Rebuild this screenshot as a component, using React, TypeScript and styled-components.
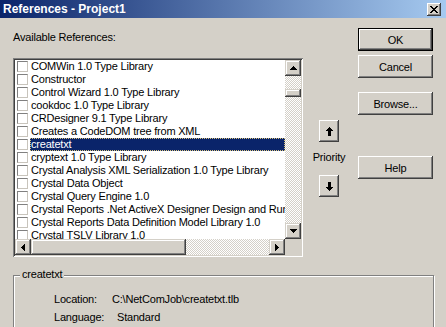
import React from "react"
import styled, { createGlobalStyle, css } from "styled-components"

const GlobalStyle = createGlobalStyle`
  html, body {
    margin: 0;
    padding: 0;
  }
  body {
    background: #d4d0c8;
    font-family: "Liberation Sans", Arial, sans-serif;
    font-size: 11px;
    letter-spacing: -0.2px;
    color: #000;
  }
`

// classic 3d bevels
const pushBevel = css`
  box-shadow: inset -1px -1px #404040, inset 1px 1px #fff, inset -2px -2px #808080;
`
const scrollBevel = css`
  box-shadow: inset -1px -1px #404040, inset 1px 1px #d4d0c8, inset -2px -2px #808080, inset 2px 2px #fff;
`
const checker = css`
  background: repeating-conic-gradient(#ffffff 0% 25%, #d4d0c8 0% 50%) 0 0 / 2px 2px;
`

const Window = styled.div`
  width: 446px;
  height: 327px;
  overflow: hidden;
  background: #d4d0c8;
  display: flex;
  flex-direction: column;
`

const TitleBar = styled.div`
  height: 18px;
  flex-shrink: 0;
  display: flex;
  align-items: center;
  justify-content: space-between;
  padding: 0 5px 0 3px;
  background: linear-gradient(to right, #0a246a, #a6caf0);
`

const Title = styled.span`
  color: #fff;
  font-weight: bold;
  font-size: 12px;
  letter-spacing: 0;
  line-height: 18px;
`

const CloseButton = styled.div`
  width: 14px;
  height: 13px;
  display: flex;
  align-items: center;
  justify-content: center;
  background: #d4d0c8;
  ${pushBevel}
`

const Body = styled.div`
  padding: 10px 0 0 13px;
  display: flex;
  flex-direction: column;
`

const MainGrid = styled.div`
  display: grid;
  grid-template-columns: 290px 55px 75px;
  align-items: start;
`

const LeftCol = styled.div`
  display: flex;
  flex-direction: column;
`

const Caption = styled.div`
  line-height: 13px;
  margin: 3px 0 14px;
`

const ListBox = styled.div`
  width: 290px;
  height: 199px;
  box-sizing: border-box;
  padding: 2px;
  background: #fff;
  box-shadow: inset 1px 1px #808080, inset -1px -1px #fff, inset 2px 2px #404040, inset -2px -2px #d4d0c8;
  display: grid;
  grid-template-columns: 1fr 16px;
  grid-template-rows: 1fr 16px;
`

const Items = styled.div`
  overflow: hidden;
  display: flex;
  flex-direction: column;
`

const Row = styled.div`
  height: 13px;
  flex-shrink: 0;
  display: flex;
  align-items: center;
`

const CheckBox = styled.span`
  width: 11px;
  height: 11px;
  box-sizing: border-box;
  flex-shrink: 0;
  margin: 0 2px 0 2px;
  background: #fff;
  border: 1px solid;
  border-color: #808080 #c8c4bc #c8c4bc #808080;
`

const ItemText = styled.span<{ $selected?: boolean }>`
  flex: 1;
  height: 13px;
  line-height: 13px;
  padding-left: 1px;
  white-space: nowrap;
  overflow: hidden;
  box-sizing: border-box;
  ${({ $selected }) =>
    $selected &&
    css`
      background: #0a246a;
      color: #fff;
      outline: 1px dotted #d8c27a;
      outline-offset: -1px;
    `}
`

const VScroll = styled.div`
  display: flex;
  flex-direction: column;
`

const HScroll = styled.div`
  display: flex;
`

const Track = styled.div<{ $vertical?: boolean }>`
  flex: 1;
  display: flex;
  flex-direction: ${({ $vertical }) => ($vertical ? "column" : "row")};
  ${checker}
`

const Thumb = styled.div<{ $size: number; $offset: number; $vertical?: boolean }>`
  flex-shrink: 0;
  background: #d4d0c8;
  ${scrollBevel}
  ${({ $vertical, $size, $offset }) =>
    $vertical
      ? css`height: ${$size}px; margin-top: ${$offset}px;`
      : css`width: ${$size}px; margin-left: ${$offset}px;`}
`

const ScrollBtn = styled.div`
  width: 16px;
  height: 16px;
  flex-shrink: 0;
  display: flex;
  align-items: center;
  justify-content: center;
  background: #d4d0c8;
  ${scrollBevel}
`

const Corner = styled.div`
  background: #d4d0c8;
`

const PriorityCol = styled.div`
  display: flex;
  flex-direction: column;
  align-items: center;
  padding: 92px 3px 0 0;
`

const ArrowButton = styled.div`
  width: 20px;
  height: 22px;
  display: flex;
  align-items: center;
  justify-content: center;
  background: #d4d0c8;
  ${pushBevel}
`

const PriorityLabel = styled.div`
  line-height: 13px;
  margin: 9px 0 11px;
`

const ButtonCol = styled.div`
  display: flex;
  flex-direction: column;
`

const Button = styled.div<{ $top: number; $default?: boolean }>`
  width: 75px;
  height: 23px;
  margin-top: ${({ $top }) => $top}px;
  display: flex;
  align-items: center;
  justify-content: center;
  background: #d4d0c8;
  ${({ $default }) =>
    $default
      ? css`box-shadow: inset 0 0 0 1px #000, inset -2px -2px #404040, inset 2px 2px #fff, inset -3px -3px #808080;`
      : pushBevel}
`

const GroupBox = styled.div`
  position: relative;
  margin-top: 18px;
  width: 421px;
  height: 80px;
  box-sizing: border-box;
  border: 1px solid #808080;
  box-shadow: inset 1px 1px #fff, 1px 1px #fff;
  padding: 17px 0 0 40px;
`

const Legend = styled.span`
  position: absolute;
  top: -8px;
  left: 6px;
  padding: 0 2px;
  line-height: 13px;
  background: #d4d0c8;
`

const InfoGrid = styled.div`
  display: grid;
  grid-template-columns: 58px auto;
  grid-auto-rows: 18px;
  line-height: 13px;
`

const InfoValue = styled.span<{ $indent?: number }>`
  padding-left: ${({ $indent = 0 }) => $indent}px;
`

type Dir = "up" | "down" | "left" | "right"

// small pixel triangle used on scroll buttons
const Tri = ({ dir }: { dir: Dir }) => {
  const rows = [0, 1, 2, 3].map((i) => ({ start: 3 - i, len: i * 2 + 1 }))
  const vertical = dir === "up" || dir === "down"
  const rects = rows.map((r, i) => {
    const line = dir === "up" || dir === "left" ? i : 3 - i
    return vertical ? (
      <rect key={i} x={r.start} y={line} width={r.len} height={1} />
    ) : (
      <rect key={i} x={line} y={r.start} width={1} height={r.len} />
    )
  })
  return (
    <svg width={vertical ? 7 : 4} height={vertical ? 4 : 7} shapeRendering="crispEdges" fill="#000">
      {rects}
    </svg>
  )
}

// bold arrow for priority buttons
const BigArrow = ({ down }: { down?: boolean }) => (
  <svg width={7} height={9} shapeRendering="crispEdges" fill="#000" style={down ? { transform: "rotate(180deg)" } : undefined}>
    <rect x={3} y={0} width={1} height={1} />
    <rect x={2} y={1} width={3} height={1} />
    <rect x={1} y={2} width={5} height={1} />
    <rect x={0} y={3} width={7} height={1} />
    <rect x={2} y={4} width={3} height={5} />
  </svg>
)

const CloseIcon = () => (
  <svg width={8} height={7} shapeRendering="crispEdges" fill="#000">
    <rect x={0} y={0} width={2} height={1} /><rect x={6} y={0} width={2} height={1} />
    <rect x={1} y={1} width={2} height={1} /><rect x={5} y={1} width={2} height={1} />
    <rect x={2} y={2} width={4} height={1} />
    <rect x={3} y={3} width={2} height={1} />
    <rect x={2} y={4} width={4} height={1} />
    <rect x={1} y={5} width={2} height={1} /><rect x={5} y={5} width={2} height={1} />
    <rect x={0} y={6} width={2} height={1} /><rect x={6} y={6} width={2} height={1} />
  </svg>
)

const references = [
  "COMWin 1.0 Type Library",
  "Constructor",
  "Control Wizard 1.0 Type Library",
  "cookdoc 1.0 Type Library",
  "CRDesigner 9.1 Type Library",
  "Creates a CodeDOM tree from XML",
  "createtxt",
  "cryptext 1.0 Type Library",
  "Crystal Analysis XML Serialization 1.0 Type Library",
  "Crystal Data Object",
  "Crystal Query Engine 1.0",
  "Crystal Reports .Net ActiveX Designer Design and Runtime Library",
  "Crystal Reports Data Definition Model Library 1.0",
  "Crystal TSLV Library 1.0",
]

const selected = "createtxt"

export default function App() {
  return (
    <>
      <GlobalStyle />
      <Window>
        <TitleBar>
          <Title>References - Project1</Title>
          <CloseButton><CloseIcon /></CloseButton>
        </TitleBar>
        <Body>
          <MainGrid>
            <LeftCol>
              <Caption>Available References:</Caption>
              <ListBox>
                <Items>
                  {references.map((name) => (
                    <Row key={name}>
                      <CheckBox />
                      <ItemText $selected={name === selected}>{name}</ItemText>
                    </Row>
                  ))}
                </Items>
                <VScroll>
                  <ScrollBtn><Tri dir="up" /></ScrollBtn>
                  <Track $vertical>
                    <Thumb $vertical $size={8} $offset={13} />
                  </Track>
                  <ScrollBtn><Tri dir="down" /></ScrollBtn>
                </VScroll>
                <HScroll>
                  <ScrollBtn><Tri dir="left" /></ScrollBtn>
                  <Track>
                    <Thumb $size={155} $offset={0} />
                  </Track>
                  <ScrollBtn><Tri dir="right" /></ScrollBtn>
                </HScroll>
                <Corner />
              </ListBox>
            </LeftCol>
            <PriorityCol>
              <ArrowButton><BigArrow /></ArrowButton>
              <PriorityLabel>Priority</PriorityLabel>
              <ArrowButton><BigArrow down /></ArrowButton>
            </PriorityCol>
            <ButtonCol>
              <Button $top={0} $default>OK</Button>
              <Button $top={4}>Cancel</Button>
              <Button $top={14}>Browse...</Button>
              <Button $top={41}>Help</Button>
            </ButtonCol>
          </MainGrid>
          <GroupBox>
            <Legend>createtxt</Legend>
            <InfoGrid>
              <span>Location:</span>
              <InfoValue>C:\NetComJob\createtxt.tlb</InfoValue>
              <span>Language:</span>
              <InfoValue $indent={5}>Standard</InfoValue>
            </InfoGrid>
          </GroupBox>
        </Body>
      </Window>
    </>
  )
}
